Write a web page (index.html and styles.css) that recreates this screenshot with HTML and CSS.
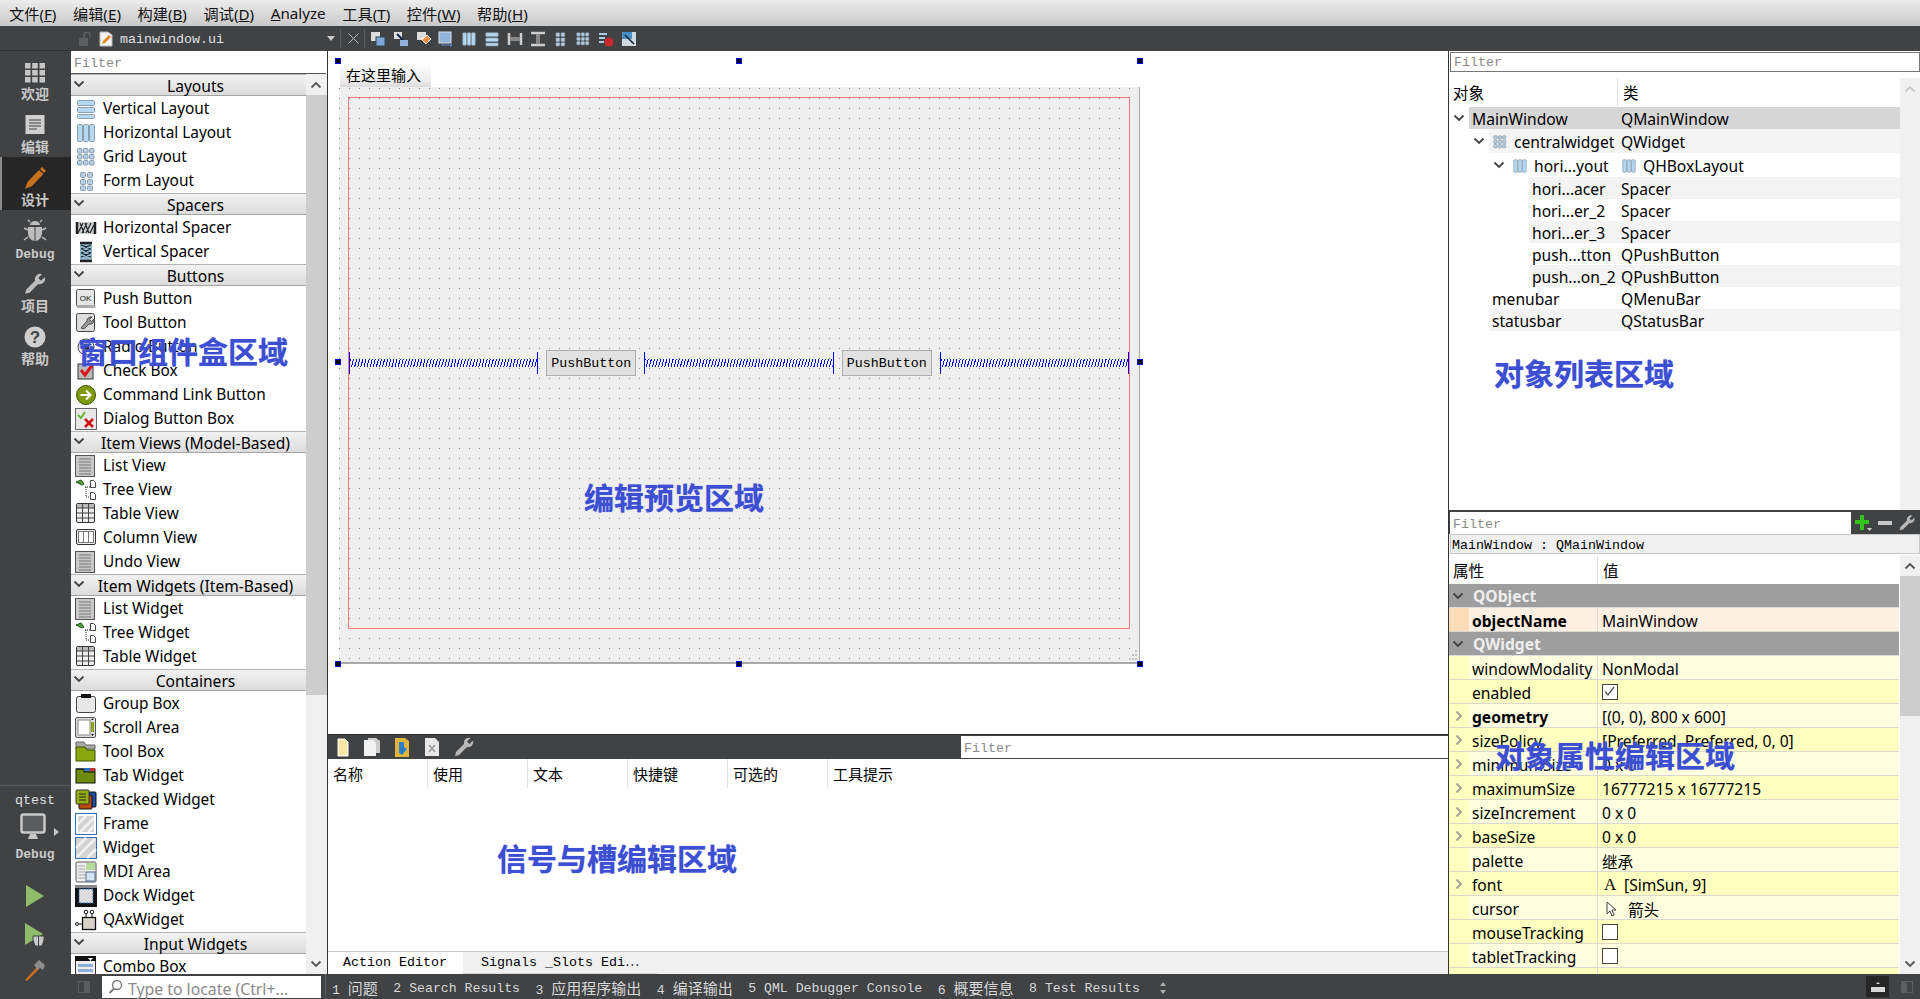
FILE: index.html
```html
<!DOCTYPE html>
<html lang="en">
<head>
    <meta charset="UTF-8">
    <title>Qt Designer</title>
    <link rel="stylesheet" href="styles.css">
</head>
<body>
<svg class="defs" width="0" height="0">
    <symbol id="chev" viewBox="0 0 12 8"><path d="M1.5 1.5 6 6l4.500-4.500" fill="none" stroke="currentColor" stroke-width="1.800"/></symbol>
    <symbol id="chevr" viewBox="0 0 8 12"><path d="M1.500 1.500 6 6l-4.500 4.500" fill="none" stroke="currentColor" stroke-width="2"/></symbol>
    <symbol id="chevu" viewBox="0 0 12 8"><path d="M1.500 6.500 6 2l4.500 4.500" fill="none" stroke="currentColor" stroke-width="1.800"/></symbol>
    <symbol id="vlayout" viewBox="0 0 22 22"><g fill="#b5d9f2" stroke="#8b9cab"><rect x="2.500" y="2.500" width="17" height="5" rx="1"/><rect x="2.500" y="9.500" width="17" height="5" rx="1"/><rect x="2.500" y="16.500" width="17" height="4" rx="1"/></g></symbol>
    <symbol id="hlayout" viewBox="0 0 22 22"><g fill="#b5d9f2" stroke="#8b9cab"><rect x="2.500" y="2.500" width="5" height="17" rx="1"/><rect x="8.500" y="2.500" width="5" height="17" rx="1"/><rect x="14.500" y="2.500" width="5" height="17" rx="1"/></g></symbol>
    <symbol id="grid" viewBox="0 0 22 22"><g fill="#b5d0e6" stroke="#8b9cab"><rect x="2.500" y="2.500" width="4.500" height="4.500" rx="1"/><rect x="8.500" y="2.500" width="4.500" height="4.500" rx="1"/><rect x="14.500" y="2.500" width="4.500" height="4.500" rx="1"/><rect x="2.500" y="8.500" width="4.500" height="4.500" rx="1"/><rect x="8.500" y="8.500" width="4.500" height="4.500" rx="1"/><rect x="14.500" y="8.500" width="4.500" height="4.500" rx="1"/><rect x="2.500" y="14.500" width="4.500" height="4.500" rx="1"/><rect x="8.500" y="14.500" width="4.500" height="4.500" rx="1"/><rect x="14.500" y="14.500" width="4.500" height="4.500" rx="1"/></g></symbol>
    <symbol id="form" viewBox="0 0 22 22"><g fill="#b5d0e6" stroke="#8b9cab"><rect x="5.500" y="2.500" width="5" height="5" rx="1"/><rect x="12.500" y="2.500" width="5" height="5" rx="1"/><rect x="5.500" y="9.500" width="5" height="5" rx="1"/><rect x="12.500" y="9.500" width="5" height="5" rx="1"/><rect x="5.500" y="16" width="5" height="4.500" rx="1"/><rect x="12.500" y="16" width="5" height="4.500" rx="1"/></g></symbol>
    <symbol id="hspacer" viewBox="0 0 22 22"><rect x="1" y="5" width="20" height="12" fill="#c9d0d4"/><path d="M2 5v12M20 5v12" stroke="#222" stroke-width="2.500"/><path d="M3 16 8 6M7 16l5-10M11 16l5-10M15 16l4-8M5 6l4 10M10 6l4 10" stroke="#2b2b2b" stroke-width="1.300" fill="none"/></symbol>
    <symbol id="vspacer" viewBox="0 0 22 22"><rect x="5" y="1" width="12" height="20" fill="#8fb7c9"/><path d="M5 2h12M5 20h12" stroke="#222" stroke-width="2.500"/><path d="M6 4l10 4M6 8l10 4M6 12l10 4M16 4 6 8M16 8 6 12M16 12 6 16" stroke="#1c2a30" stroke-width="1.300" fill="none"/></symbol>
    <symbol id="okbtn" viewBox="0 0 22 22"><rect x="1.500" y="1.500" width="18" height="17" rx="2" fill="#e6e6e6" stroke="#444"/><rect x="2.500" y="17" width="18" height="3" fill="#aaa"/><text x="10.500" y="13" font-size="8" text-anchor="middle" font-family="Liberation Sans" fill="#111">OK</text></symbol>
    <symbol id="toolbtn" viewBox="0 0 22 22"><rect x="1.500" y="1.500" width="18" height="18" rx="2" fill="#ddd" stroke="#444"/><path d="M6 16l6-7a4 4 0 0 1 5-4l-2.500 2.500 2 2L19 7a4 4 0 0 1-5 5l-5 5z" fill="#999" stroke="#333" stroke-width=".8"/></symbol>
    <symbol id="radio" viewBox="0 0 22 22"><circle cx="11" cy="11" r="8" fill="#eee" stroke="#444"/><circle cx="11" cy="11" r="3.500" fill="#222"/></symbol>
    <symbol id="check" viewBox="0 0 22 22"><rect x="3" y="4" width="15" height="15" fill="#bbb" stroke="#333"/><path d="M6 10l4 5 8-11" fill="none" stroke="#d8141c" stroke-width="3"/></symbol>
    <symbol id="cmdlink" viewBox="0 0 22 22"><circle cx="11" cy="11" r="9.500" fill="#7d9a10" stroke="#3d4f06"/><path d="M5.500 11h9M11 6.500l4.500 4.500-4.500 4.500" fill="none" stroke="#fff" stroke-width="2"/></symbol>
    <symbol id="dialogbtn" viewBox="0 0 22 22"><rect x=".5" y=".5" width="21" height="21" fill="#e8e8e8" stroke="#666"/><path d="M3 7l3 3 4-6" fill="none" stroke="#6cb12a" stroke-width="2"/><path d="M10 11l8 8M18 11l-8 8" stroke="#cc1010" stroke-width="2.500"/></symbol>
    <symbol id="listv" viewBox="0 0 22 22"><rect x=".5" y=".5" width="19" height="21" fill="#c8c8c8" stroke="#555"/><path d="M4 4h12M4 7h12M4 10h12M4 13h12M4 16h12M4 19h12" stroke="#777"/></symbol>
    <symbol id="treev" viewBox="0 0 22 22"><path d="M1 3l5-2 3 4-2 1z" fill="#4fa03a" stroke="#1d5a18"/><path d="M10 8h5M11 8v10h4" fill="none" stroke="#222" stroke-dasharray="1 1"/><path d="M15.500 1.500h3l2 2v5h-5zM15.500 13.500h3l2 2v5h-5z" fill="#fff" stroke="#444"/></symbol>
    <symbol id="tablev" viewBox="0 0 22 22"><rect x="1.500" y=".5" width="18" height="19" rx="1.500" fill="#eee" stroke="#333"/><rect x="2" y="1" width="17" height="4" fill="#bbb"/><path d="M2 5h17M2 10h17M2 15h17M7.500 1v18M13.500 1v18" stroke="#444"/></symbol>
    <symbol id="columnv" viewBox="0 0 22 22"><rect x="1.500" y="2.500" width="19" height="15" rx="1.500" fill="#eee" stroke="#333"/><rect x="3.500" y="4.500" width="15" height="11" fill="#fff" stroke="#777"/><path d="M8.500 5v10M13.500 5v10" stroke="#777"/></symbol>
    <symbol id="groupb" viewBox="0 0 22 22"><rect x="1.500" y="3.500" width="19" height="16" rx="2" fill="#e8e8e8" stroke="#444"/><rect x="6" y="1" width="10" height="4" fill="#111"/></symbol>
    <symbol id="scrolla" viewBox="0 0 22 22"><rect x=".5" y=".5" width="20" height="20" rx="1.500" fill="#ddd" stroke="#555"/><rect x="3" y="3" width="12" height="15" fill="#fff" stroke="#888"/><rect x="16" y="5" width="3" height="10" fill="#8aa80e"/><path d="M16 3h3l-1.500-1.500zM16 17h3l-1.500 2z" fill="#111"/></symbol>
    <symbol id="toolb" viewBox="0 0 22 22"><path d="M1 1h8l2 3h9v4H1z" fill="#aaa" stroke="#666"/><path d="M1 6h9l2 3h8v11H1z" fill="#8aa80e" stroke="#3d4f06"/></symbol>
    <symbol id="tabw" viewBox="0 0 22 22"><rect x="1" y="4" width="19" height="14" fill="#6e8b0c" stroke="#111"/><path d="M1 4h8v3h11" fill="none" stroke="#111"/><rect x="9" y="3" width="6" height="3" fill="#2a70c8"/><rect x="15" y="3" width="5" height="3" fill="#c83030"/></symbol>
    <symbol id="stacked" viewBox="0 0 22 22"><rect x="8" y="3" width="13" height="15" rx="1" fill="#1f4da8" stroke="#111"/><rect x="4" y="6" width="13" height="14" rx="1" fill="#b84a10" stroke="#111"/><rect x="1" y="1" width="13" height="14" rx="1" fill="#94b010" stroke="#333"/><path d="M4 5h7M4 8h7M4 11h7" stroke="#222"/></symbol>
    <symbol id="frame" viewBox="0 0 22 22"><rect x=".5" y=".5" width="21" height="21" fill="#fff" stroke="#2f6db5"/><rect x="3" y="3" width="16" height="16" fill="#d4d4d4"/><path d="M3 11l8-8M5 19 19 5M13 19l6-6" stroke="#f2f2f2" stroke-width="2.500"/></symbol>
    <symbol id="widgetw" viewBox="0 0 22 22"><rect x=".5" y=".5" width="21" height="21" fill="#d4d4d4" stroke="#2f6db5"/><path d="M1 11 11 1M2 20 20 2M12 21l9-9" stroke="#f2f2f2" stroke-width="2.500"/></symbol>
    <symbol id="mdi" viewBox="0 0 22 22"><rect x="1" y="1" width="20" height="20" rx="1.500" fill="#eee" stroke="#555"/><path d="M3 5h7M3 8h7M3 11h7M3 14h7M3 17h7" stroke="#aaa"/><rect x="11" y="2" width="9" height="7" fill="#b4dc96"/><rect x="11" y="11" width="9" height="9" fill="#d2e4f4" stroke="#4d6d8d"/></symbol>
    <symbol id="dock" viewBox="0 0 22 22"><rect width="22" height="22" fill="#111"/><rect y="0" width="22" height="3" fill="#888"/><rect x="4" y="4" width="14" height="14" fill="#ddd" stroke="#2f6db5" stroke-dasharray="2 1"/></symbol>
    <symbol id="qax" viewBox="0 0 22 22"><rect x="7.500" y="8.500" width="13" height="12" fill="#d6d2c8" stroke="#111" stroke-width="1.300"/><path d="M11 8V5M17 8V5M1 15h6" stroke="#111"/><circle cx="11" cy="3" r="1.800" fill="#fff" stroke="#111"/><circle cx="17" cy="3" r="1.800" fill="#fff" stroke="#111"/><circle cx="2" cy="15" r="1.500" fill="#fff" stroke="#111"/></symbol>
    <symbol id="combo" viewBox="0 0 22 22"><rect x=".5" y=".5" width="20" height="24" fill="#eee" stroke="#333"/><rect y="0" width="21" height="5" fill="#111"/><path d="M13 2h5l-2.500 3z" fill="#fff"/><rect x="3" y="8" width="15" height="3" fill="#8cb0d8"/><rect x="3" y="13" width="15" height="3" fill="#8cb0d8"/><rect x="3" y="18" width="15" height="3" fill="#8cb0d8"/></symbol>
    <symbol id="wrench" viewBox="0 0 22 22"><path d="M2 20 3 16l8-8a5 5 0 0 1 6.500-6L14 5.500l2.500 2.500L20 4.500a5 5 0 0 1-6 6.500l-8 8z" fill="currentColor"/></symbol>
</svg>

<div class="menubar">
    <span class="menu">文件(<u>F</u>)</span>
    <span class="menu">编辑(<u>E</u>)</span>
    <span class="menu">构建(<u>B</u>)</span>
    <span class="menu">调试(<u>D</u>)</span>
    <span class="menu"><u>A</u>nalyze</span>
    <span class="menu">工具(<u>T</u>)</span>
    <span class="menu">控件(<u>W</u>)</span>
    <span class="menu">帮助(<u>H</u>)</span>
</div>

<div class="app">
    <div class="modebar">
        <div class="mode-top"></div>
        <div class="mode">
            <svg class="mode-ico" viewBox="0 0 24 24"><g fill="#c6c6c6"><rect x="2" y="3" width="5.500" height="5.500"/><rect x="9.200" y="3" width="5.500" height="5.500"/><rect x="16.500" y="3" width="5.500" height="5.500"/><rect x="2" y="10" width="5.500" height="5.500"/><rect x="9.200" y="10" width="5.500" height="5.500"/><rect x="16.500" y="10" width="5.500" height="5.500"/><rect x="2" y="17" width="5.500" height="5.500"/><rect x="9.200" y="17" width="5.500" height="5.500"/><rect x="16.500" y="17" width="5.500" height="5.500"/></g></svg>
            <span>欢迎</span>
        </div>
        <div class="mode">
            <svg class="mode-ico" viewBox="0 0 24 24"><rect x="2.500" y="2" width="19" height="19" fill="#cfcfcf"/><path d="M6 7h12M6 10h12M6 13h12M6 16h8" stroke="#444" stroke-width="1.200"/></svg>
            <span>编辑</span>
        </div>
        <div class="mode active">
            <svg class="mode-ico" viewBox="0 0 24 24"><path d="M2 23l2.500-7L16 4l4.500 4L9 20z" fill="#c9701c"/><path d="M17 3l2-2 4 4-2 2z" fill="#c9701c"/></svg>
            <span>设计</span>
        </div>
        <div class="mode">
            <svg class="mode-ico" viewBox="0 0 24 24"><g fill="#bdbdbd"><path d="M7 6a5 4 0 0 1 10 0z"/><path d="M5 8h6.500v14A7 8 0 0 1 5 14zM12.500 8H19v6a7 8 0 0 1-6.500 8z"/></g><path d="M1 9l4 2M23 9l-4 2M1 21l4-3M23 21l-4-3M7 3 5 1M17 3l2-2" stroke="#bdbdbd" stroke-width="1.500"/></svg>
            <span class="mode-latin">Debug</span>
        </div>
        <div class="mode">
            <svg class="mode-ico wrench-ico" viewBox="0 0 22 22"><use href="#wrench"/></svg>
            <span>项目</span>
        </div>
        <div class="mode">
            <svg class="mode-ico" viewBox="0 0 24 24"><circle cx="12" cy="12" r="10.500" fill="#cfcfcf"/><text x="12" y="18" font-size="17" font-weight="700" text-anchor="middle" font-family="Liberation Sans" fill="#404244">?</text></svg>
            <span>帮助</span>
        </div>

        <div class="kit">
            <div class="kit-name">qtest</div>
            <div class="kit-monitor">
                <svg width="26" height="28" viewBox="0 0 26 28"><rect x="1.500" y="1.500" width="23" height="18" rx="2" fill="#5a5c5e" stroke="#c8c8c8" stroke-width="2.500"/><path d="M10 21h6l2 5H8z" fill="#c8c8c8"/></svg>
                <svg class="kit-arrow" width="5" height="8" viewBox="0 0 5 8"><path d="M0 0l5 4-5 4z" fill="#c8c8c8"/></svg>
            </div>
            <div class="kit-debug">Debug</div>
            <div class="run-btn"><svg width="20" height="24" viewBox="0 0 20 24"><path d="M1 1l18 11L1 23z" fill="#8fbc6a"/></svg></div>
            <div class="run-btn"><svg width="22" height="26" viewBox="0 0 22 26"><path d="M1 1l18 11L1 23z" fill="#8fbc6a"/><path d="M9 14h11v4l-2 6h-7l-2-6z" fill="#c8c8c8" stroke="#404244"/><path d="M14.500 14v10" stroke="#404244"/></svg></div>
            <div class="run-btn"><svg width="24" height="24" viewBox="0 0 24 24"><path d="M2 22 14 9l2 2L4 23z" fill="#c9701c"/><path d="M11 7l5-5 6 5-2 5-3-2-2 2z" fill="#8d8d8d"/></svg></div>
        </div>
    </div>

    <div class="workspace">
        <div class="edbar">
            <svg class="ed-lock" width="14" height="14" viewBox="0 0 14 14"><rect x="1" y="6" width="9" height="8" fill="#5c5e60"/><path d="M6 6V3a3 3 0 0 1 6 0v2" fill="none" stroke="#5c5e60" stroke-width="1.500"/></svg>
            <svg class="ed-doc" width="14" height="16" viewBox="0 0 14 16"><path d="M1 1h8l4 3v11H1z" fill="#f2f2f2" stroke="#bbb"/><path d="M3 13l1-3 6-6 2 2-6 6z" fill="#e08a1e"/></svg>
            <span class="ed-file">mainwindow.ui</span>
            <svg class="ed-drop" width="8" height="5" viewBox="0 0 8 5"><path d="M0 0h8L4 5z" fill="#c8c8c8"/></svg>
            <span class="ed-sep"></span>
            <svg class="ed-close" width="11" height="11" viewBox="0 0 11 11"><path d="M.5.5l10 10M10.500.5l-10 10" stroke="#b8b8b8"/></svg>
            <span class="ed-sep"></span>
            <div class="ed-tools">
                <svg viewBox="0 0 16 16"><rect x="1" y="1" width="9" height="9" fill="#ddd"/><rect x="6" y="6" width="9" height="9" fill="#7fa8d8" stroke="#345"/></svg>
                <svg viewBox="0 0 16 16"><rect x="1" y="1" width="8" height="7" fill="#ddd"/><path d="M4 3l6 6" stroke="#124" stroke-width="2"/><rect x="7" y="9" width="8" height="6" fill="#8fb4dc"/></svg>
                <svg viewBox="0 0 16 16"><rect x="1" y="1" width="9" height="8" fill="#ddd"/><path d="M6 9l5-5 4 4-5 5z" fill="#f08a3c" stroke="#fff"/></svg>
                <svg viewBox="0 0 16 16"><rect x="1" y="1" width="12" height="11" fill="#8fb4dc" stroke="#ddd"/><path d="M3 14h11M12 12l2 2-2 2" stroke="#5a8ed0" fill="none"/></svg>
                <svg viewBox="0 0 16 16"><use href="#hlayout"/></svg>
                <svg viewBox="0 0 16 16"><use href="#vlayout"/></svg>
                <svg viewBox="0 0 16 16"><path d="M2 2v12M14 2v12" stroke="#ccc" stroke-width="2.500"/><path d="M3 8h10" stroke="#888" stroke-width="4"/></svg>
                <svg viewBox="0 0 16 16"><path d="M1 2h14M1 14h14" stroke="#ccc" stroke-width="2.500"/><path d="M8 3v10" stroke="#888" stroke-width="4"/></svg>
                <svg viewBox="0 0 16 16"><use href="#form"/></svg>
                <svg viewBox="0 0 16 16"><use href="#grid"/></svg>
                <svg viewBox="0 0 16 16"><path d="M1 3h8M1 7h6M1 11h5" stroke="#a8cce8" stroke-width="2"/><circle cx="11" cy="11" r="4.500" fill="#c8282c"/></svg>
                <svg viewBox="0 0 16 16"><rect x="1" y="1" width="14" height="14" fill="#cfd8e0"/><rect x="1" y="1" width="10" height="7" fill="#4a8ec8"/><path d="M4 4l9 9" stroke="#123" stroke-width="1.500"/></svg>
            </div>
        </div>

        <div class="panes">
            <div class="widgetbox">
                <div class="filter wb-filter">Filter</div>
                <div class="wb-body">
                    <div class="wb-list">
                        <div class="cat first"><svg class="cat-chev"><use href="#chev"/></svg><span>Layouts</span></div>
                        <div class="item"><svg><use href="#vlayout"/></svg>Vertical Layout</div>
                        <div class="item"><svg><use href="#hlayout"/></svg>Horizontal Layout</div>
                        <div class="item"><svg><use href="#grid"/></svg>Grid Layout</div>
                        <div class="item"><svg><use href="#form"/></svg>Form Layout</div>
                        <div class="cat"><svg class="cat-chev"><use href="#chev"/></svg><span>Spacers</span></div>
                        <div class="item"><svg><use href="#hspacer"/></svg>Horizontal Spacer</div>
                        <div class="item"><svg><use href="#vspacer"/></svg>Vertical Spacer</div>
                        <div class="cat"><svg class="cat-chev"><use href="#chev"/></svg><span>Buttons</span></div>
                        <div class="item"><svg><use href="#okbtn"/></svg>Push Button</div>
                        <div class="item"><svg><use href="#toolbtn"/></svg>Tool Button</div>
                        <div class="item"><svg><use href="#radio"/></svg>Radio Button</div>
                        <div class="item"><svg><use href="#check"/></svg>Check Box</div>
                        <div class="item"><svg><use href="#cmdlink"/></svg>Command Link Button</div>
                        <div class="item"><svg><use href="#dialogbtn"/></svg>Dialog Button Box</div>
                        <div class="cat"><svg class="cat-chev"><use href="#chev"/></svg><span>Item Views (Model-Based)</span></div>
                        <div class="item"><svg><use href="#listv"/></svg>List View</div>
                        <div class="item"><svg><use href="#treev"/></svg>Tree View</div>
                        <div class="item"><svg><use href="#tablev"/></svg>Table View</div>
                        <div class="item"><svg><use href="#columnv"/></svg>Column View</div>
                        <div class="item"><svg><use href="#listv"/></svg>Undo View</div>
                        <div class="cat"><svg class="cat-chev"><use href="#chev"/></svg><span>Item Widgets (Item-Based)</span></div>
                        <div class="item"><svg><use href="#listv"/></svg>List Widget</div>
                        <div class="item"><svg><use href="#treev"/></svg>Tree Widget</div>
                        <div class="item"><svg><use href="#tablev"/></svg>Table Widget</div>
                        <div class="cat"><svg class="cat-chev"><use href="#chev"/></svg><span>Containers</span></div>
                        <div class="item"><svg><use href="#groupb"/></svg>Group Box</div>
                        <div class="item"><svg><use href="#scrolla"/></svg>Scroll Area</div>
                        <div class="item"><svg><use href="#toolb"/></svg>Tool Box</div>
                        <div class="item"><svg><use href="#tabw"/></svg>Tab Widget</div>
                        <div class="item"><svg><use href="#stacked"/></svg>Stacked Widget</div>
                        <div class="item"><svg><use href="#frame"/></svg>Frame</div>
                        <div class="item"><svg><use href="#widgetw"/></svg>Widget</div>
                        <div class="item"><svg><use href="#mdi"/></svg>MDI Area</div>
                        <div class="item"><svg><use href="#dock"/></svg>Dock Widget</div>
                        <div class="item"><svg><use href="#qax"/></svg>QAxWidget</div>
                        <div class="cat"><svg class="cat-chev"><use href="#chev"/></svg><span>Input Widgets</span></div>
                        <div class="item"><svg><use href="#combo"/></svg>Combo Box</div>
                    </div>
                    <div class="scroll wb-scroll">
                        <svg class="sb-up"><use href="#chevu"/></svg>
                        <div class="sb-thumb"></div>
                        <svg class="sb-down"><use href="#chev"/></svg>
                    </div>
                </div>
            </div>

            <div class="center">
                <div class="canvas">
                    <div class="form">
                        <div class="form-menu"><span>在这里输入</span></div>
                        <div class="form-central">
                            <div class="central-box">
                                <div class="spring"></div>
                                <div class="pushbtn">PushButton</div>
                                <div class="spring"></div>
                                <div class="pushbtn">PushButton</div>
                                <div class="spring"></div>
                            </div>
                            <svg class="grip" width="12" height="12" viewBox="0 0 12 12"><path d="M9 1h2v2H9zM6 5h2v2H6zM9 5h2v2H9zM3 9h2v2H3zM6 9h2v2H6zM9 9h2v2H9z" fill="#c4c4c4"/></svg>
                        </div>
                        <i class="handle h-tl"></i><i class="handle h-tc"></i><i class="handle h-tr"></i>
                        <i class="handle h-ml"></i><i class="handle h-mr"></i>
                        <i class="handle h-bl"></i><i class="handle h-bc"></i><i class="handle h-br"></i>
                    </div>
                </div>
                <div class="action-bar">
                    <div class="action-tools">
                        <svg width="12" height="20" viewBox="0 0 12 20"><path d="M1 2h7l3 3v14H1z" fill="#fbe7a8" stroke="#fff"/></svg>
                        <svg width="18" height="20" viewBox="0 0 18 20"><path d="M5 1h8l4 3v12H5z" fill="#ccc"/><path d="M1 3h9l3 3v13H1z" fill="#f2f2f2"/></svg>
                        <svg width="16" height="22" viewBox="0 0 16 22"><path d="M1 2h10l4 3v16H1z" fill="#e2b43c"/><path d="M5 6h5v5l3 2-5 6-3-2z" fill="#2b7fc8"/></svg>
                        <svg width="16" height="20" viewBox="0 0 16 20"><path d="M1 1h10l4 4v14H1z" fill="#e8e8e8"/><path d="M5 8l6 7M11 8l-6 7" stroke="#999" stroke-width="1.500"/></svg>
                        <svg class="tool-wrench" width="22" height="22"><use href="#wrench"/></svg>
                    </div>
                    <div class="filter action-filter">Filter</div>
                </div>
                <div class="action-head">
                    <span>名称</span><span>使用</span><span>文本</span><span>快捷键</span><span>可选的</span><span class="last">工具提示</span>
                </div>
                <div class="action-body"></div>
                <div class="tabs">
                    <div class="tab current">Action Editor</div>
                    <div class="tab">Signals _Slots Edi⋯</div>
                </div>
            </div>

            <div class="right">
                <div class="inspector">
                    <div class="filter ins-filter">Filter</div>
                    <div class="ins-body">
                        <div class="ins-table">
                            <div class="ins-head"><span class="h-name">对象</span><span class="h-cls">类</span></div>
                            <div class="tree-row"><span class="indent i0"><svg class="chev"><use href="#chev"/></svg></span><div class="tree-cells sel"><span class="name">MainWindow</span><span class="cls">QMainWindow</span></div></div>
                            <div class="tree-row tall"><span class="indent i1"><svg class="chev"><use href="#chev"/></svg></span><div class="tree-cells alt"><span class="name"><svg class="ti"><use href="#grid"/></svg>centralwidget</span><span class="cls">QWidget</span></div></div>
                            <div class="tree-row tall"><span class="indent i2"><svg class="chev"><use href="#chev"/></svg></span><div class="tree-cells"><span class="name"><svg class="ti"><use href="#hlayout"/></svg>hori...yout</span><span class="cls"><svg class="ti"><use href="#hlayout"/></svg>QHBoxLayout</span></div></div>
                            <div class="tree-row"><span class="indent i3"></span><div class="tree-cells alt"><span class="name">hori...acer</span><span class="cls">Spacer</span></div></div>
                            <div class="tree-row"><span class="indent i3"></span><div class="tree-cells"><span class="name">hori...er_2</span><span class="cls">Spacer</span></div></div>
                            <div class="tree-row"><span class="indent i3"></span><div class="tree-cells alt"><span class="name">hori...er_3</span><span class="cls">Spacer</span></div></div>
                            <div class="tree-row"><span class="indent i3"></span><div class="tree-cells"><span class="name">push...tton</span><span class="cls">QPushButton</span></div></div>
                            <div class="tree-row"><span class="indent i3"></span><div class="tree-cells alt"><span class="name">push...on_2</span><span class="cls">QPushButton</span></div></div>
                            <div class="tree-row"><span class="indent i1"></span><div class="tree-cells"><span class="name">menubar</span><span class="cls">QMenuBar</span></div></div>
                            <div class="tree-row"><span class="indent i1"></span><div class="tree-cells alt"><span class="name">statusbar</span><span class="cls">QStatusBar</span></div></div>
                        </div>
                        <div class="scroll ins-scroll">
                            <svg class="sb-up faded"><use href="#chevu"/></svg>
                        </div>
                    </div>
                </div>

                <div class="propedit">
                    <div class="prop-top">
                        <div class="filter prop-filter">Filter</div>
                        <div class="prop-tools">
                            <svg width="18" height="18" viewBox="0 0 18 18"><path d="M6 1h4v5h5v4h-5v6H6v-6H1V6h5z" fill="#33c41c"/><path d="M13 14h5l-2.500 3z" fill="#ccc"/></svg>
                            <svg width="16" height="18" viewBox="0 0 16 18"><rect x="1" y="7" width="14" height="4" fill="#c8c8c8"/></svg>
                            <svg class="tool-wrench" width="18" height="18"><use href="#wrench"/></svg>
                        </div>
                    </div>
                    <div class="prop-class">MainWindow : QMainWindow</div>
                    <div class="prop-body">
                        <div class="prop-table">
                            <div class="prop-head"><span class="ph-name">属性</span><span class="ph-val">值</span></div>
                            <div class="group"><svg class="chev"><use href="#chev"/></svg>QObject</div>
                            <div class="prop named"><span class="gut"></span><span class="pname"><b>objectName</b></span><span class="pval">MainWindow</span></div>
                            <div class="group"><svg class="chev"><use href="#chev"/></svg>QWidget</div>
                            <div class="prop"><span class="gut"></span><span class="pname">windowModality</span><span class="pval">NonModal</span></div>
                            <div class="prop dark"><span class="gut"></span><span class="pname">enabled</span><span class="pval"><i class="box"><svg width="13" height="13" viewBox="0 0 13 13"><path d="M2 6.500 5 10l6-8" fill="none" stroke="#555" stroke-width="1.300"/></svg></i></span></div>
                            <div class="prop"><span class="gut"><svg class="cr"><use href="#chevr"/></svg></span><span class="pname"><b>geometry</b></span><span class="pval">[(0, 0), 800 x 600]</span></div>
                            <div class="prop dark"><span class="gut"><svg class="cr"><use href="#chevr"/></svg></span><span class="pname">sizePolicy</span><span class="pval">[Preferred, Preferred, 0, 0]</span></div>
                            <div class="prop"><span class="gut"><svg class="cr"><use href="#chevr"/></svg></span><span class="pname">minimumSize</span><span class="pval">0 x 0</span></div>
                            <div class="prop dark"><span class="gut"><svg class="cr"><use href="#chevr"/></svg></span><span class="pname">maximumSize</span><span class="pval">16777215 x 16777215</span></div>
                            <div class="prop"><span class="gut"><svg class="cr"><use href="#chevr"/></svg></span><span class="pname">sizeIncrement</span><span class="pval">0 x 0</span></div>
                            <div class="prop dark"><span class="gut"><svg class="cr"><use href="#chevr"/></svg></span><span class="pname">baseSize</span><span class="pval">0 x 0</span></div>
                            <div class="prop"><span class="gut"></span><span class="pname">palette</span><span class="pval">继承</span></div>
                            <div class="prop dark"><span class="gut"><svg class="cr"><use href="#chevr"/></svg></span><span class="pname">font</span><span class="pval"><span class="pfont">A</span>[SimSun, 9]</span></div>
                            <div class="prop"><span class="gut"></span><span class="pname">cursor</span><span class="pval"><svg class="pcur" width="10" height="16" viewBox="0 0 10 16"><path d="M1 1v12l3-3 2 5 2-1-2-5h4z" fill="#fff" stroke="#444"/></svg>箭头</span></div>
                            <div class="prop dark"><span class="gut"></span><span class="pname">mouseTracking</span><span class="pval"><i class="box"></i></span></div>
                            <div class="prop"><span class="gut"></span><span class="pname">tabletTracking</span><span class="pval"><i class="box"></i></span></div>
                            <div class="prop dark"><span class="gut"></span><span class="pname"></span><span class="pval"></span></div>
                        </div>
                        <div class="scroll prop-scroll">
                            <svg class="sb-up"><use href="#chevu"/></svg>
                            <div class="sb-thumb"></div>
                            <svg class="sb-down"><use href="#chev"/></svg>
                        </div>
                    </div>
                </div>
            </div>
        </div>

        <div class="statusbar">
            <svg class="st-toggle" width="12" height="12" viewBox="0 0 12 12"><rect width="12" height="12" fill="#5c5e60"/><rect x="1" y="1" width="5" height="10" fill="#404244"/></svg>
            <div class="locator">
                <svg width="16" height="16" viewBox="0 0 16 16"><circle cx="9" cy="6" r="4.500" fill="none" stroke="#777" stroke-width="1.300"/><path d="M6 9.500 1.500 14" stroke="#777" stroke-width="1.800"/></svg>
                <span>Type to locate (Ctrl+...</span>
            </div>
            <div class="st-panes">
                <span>1 <em>问题</em></span>
                <span>2 Search Results</span>
                <span>3 <em>应用程序输出</em></span>
                <span>4 <em>编译输出</em></span>
                <span>5 QML Debugger Console</span>
                <span>6 <em>概要信息</em></span>
                <span>8 Test Results</span>
                <svg width="8" height="12" viewBox="0 0 8 12"><path d="M4 0l3 4H1zM4 12 1 8h6z" fill="#b0b0b0"/></svg>
            </div>
            <div class="st-right">
                <div class="st-active"><svg width="14" height="12" viewBox="0 0 14 12"><path d="M0 6h14v5H0z" fill="#d8d8d8"/><path d="M7 1l2 2H5z" fill="#d8d8d8"/></svg></div>
                <svg class="st-side" width="12" height="12" viewBox="0 0 12 12"><rect width="12" height="12" fill="#5c5e60"/><rect x="6" y="1" width="5" height="10" fill="#404244"/></svg>
            </div>
        </div>
    </div>
</div>

<!-- 截图上标注的区域名称 -->
<div class="note note-box">窗口组件盒区域</div>
<div class="note note-list">对象列表区域</div>
<div class="note note-edit">编辑预览区域</div>
<div class="note note-prop">对象属性编辑区域</div>
<div class="note note-slot">信号与槽编辑区域</div>
</body>
</html>
```

FILE: styles.css
```css
*{
    box-sizing: border-box;
}
html,body{
    margin: 0;
    height: 100%;
    overflow: hidden;
}
body{
    position: relative;
    display: flex;
    flex-direction: column;
    width: 1920px;
    height: 999px;
    background: #404244;
    color: #000;
    font-family: "Noto Sans", "Noto Sans CJK SC", sans-serif;
    font-size: 15.600px;
}
.defs{
    display: none;
}
svg{
    display: block;
    flex: none;
}
/*菜单栏*/
.menubar{
    display: flex;
    align-items: center;
    flex: none;
    height: 26px;
    padding-left: 9px;
    gap: 16.600px;
    background: linear-gradient(to bottom,#ececec,#c9c9c9);
    color: #111;
    font-size: 15.200px;
}
/*左边模式栏*/
.app{
    display: flex;
    flex: 1;
    min-height: 0;
}
.modebar{
    display: flex;
    flex-direction: column;
    flex: none;
    width: 71px;
    background: #404244;
}
.mode-top{
    height: 25px;
    border-bottom: 1px solid #333;
}
.mode{
    display: flex;
    flex-direction: column;
    align-items: center;
    height: 53px;
    padding: 9px 1px 0 0;
    color: #c8c8c8;
    font-size: 14px;
    font-weight: 700;
    line-height: 20px;
}
.mode.active{
    background: #262626;
    border-left: 2px solid #8a8a8a;
    padding-right: 3px;
}
.mode-ico{
    width: 24px;
    height: 24px;
}
.wrench-ico{
    color: #bdbdbd;
}
.mode-latin,.kit-debug{
    font-family: "Liberation Mono", monospace;
    font-size: 13px;
    font-weight: 700;
}
.mode-latin{
    padding-top: 2px;
}
.kit{
    margin-top: auto;
    padding-top: 7px;
    border-top: 1px solid #5c5e60;
    height: 214px;
    color: #c8c8c8;
}
.kit-name{
    height: 16px;
    line-height: 16px;
    padding-right: 1px;
    text-align: center;
    color: #e0e0e0;
    font-family: "Liberation Mono", monospace;
    font-size: 13.330px;
}
.kit-monitor{
    display: flex;
    align-items: flex-end;
    justify-content: center;
    gap: 8px;
    height: 34px;
    padding: 4px 2px 2px 10px;
}
.kit-arrow{
    margin-bottom: 5px;
}
.kit-debug{
    height: 20px;
    margin-top: 2px;
    padding-right: 1px;
    line-height: 20px;
    text-align: center;
}
.run-btn{
    display: flex;
    align-items: center;
    justify-content: center;
    height: 38px;
    padding-right: 1px;
    margin-top: 1px;
}
.kit-debug + .run-btn{
    margin-top: 12px;
}
.run-btn:last-child{
    margin-top: -3px;
}
/*工作区*/
.workspace{
    display: flex;
    flex-direction: column;
    flex: 1;
    min-width: 0;
}
.edbar{
    display: flex;
    align-items: center;
    flex: none;
    height: 25px;
    padding-left: 7px;
    background: #404244;
    color: #e0e0e0;
}
.ed-doc{
    margin-left: 7px;
}
.ed-file{
    width: 199px;
    margin-left: 7px;
    padding-top: 2px;
    font-family: "Liberation Mono", monospace;
    font-size: 13.330px;
}
.ed-sep{
    width: 1px;
    height: 19px;
    margin-left: 5px;
    background: #5c5e60;
}
.ed-drop{
    margin-left: 8px;
}
.ed-close{
    margin-left: 7px;
}
.ed-tools{
    display: flex;
    gap: 6.800px;
    margin-left: 5px;
}
.ed-tools svg{
    width: 16px;
    height: 16px;
}
.panes{
    display: flex;
    flex: 1;
    min-height: 0;
}
.filter{
    background: #fff;
    color: #8a8a8a;
    font-family: "Liberation Mono", monospace;
    font-size: 13.330px;
    padding-left: 3px;
}
/*窗口组件盒*/
.widgetbox{
    display: flex;
    flex-direction: column;
    flex: none;
    width: 257px;
    padding-top: 1px;
    background: #fff;
    border-right: 1px solid #333;
}
.wb-filter{
    height: 22px;
    line-height: 23px;
    margin-right: 1px;
    border-bottom: 1px solid #555;
}
.wb-body{
    display: flex;
    flex: 1;
    min-height: 0;
    overflow: hidden;
}
.wb-list{
    flex: none;
    width: 235px;
    overflow: hidden;
}
.cat{
    display: flex;
    align-items: center;
    justify-content: center;
    position: relative;
    height: 22px;
    margin-top: 1px;
    padding: 1px 0 0 14px;
    background: linear-gradient(to bottom,#f2f2f2,#dcdcdc);
    border-top: 1px solid #b4b4b4;
    border-bottom: 1px solid #a4a4a4;
    line-height: 20px;
}
.cat.first{
    margin-top: 0;
}
.cat-chev{
    position: absolute;
    left: 2px;
    top: 5px;
    width: 12px;
    height: 8px;
    color: #444;
}
.item{
    display: flex;
    align-items: center;
    height: 24px;
    padding: 1px 0 0 4px;
    gap: 6px;
    font-size: 15.400px;
    white-space: nowrap;
}
.item svg{
    width: 22px;
    height: 22px;
}
.scroll{
    position: relative;
    flex: none;
    background: #f0f0f0;
}
.wb-scroll{
    width: 21px;
}
.sb-up,.sb-down{
    position: absolute;
    left: 4px;
    width: 12px;
    height: 8px;
    color: #555;
}
.sb-up{
    top: 7px;
}
.sb-down{
    bottom: 6px;
}
.sb-up.faded{
    color: #c8c8c8;
}
.sb-thumb{
    background: #cdcdcd;
}
.wb-scroll .sb-thumb{
    margin-top: 21px;
    height: 600px;
}
/*中间的编辑区*/
.center{
    display: flex;
    flex-direction: column;
    flex: none;
    width: 1120px;
    background: #fff;
}
.canvas{
    flex: none;
    height: 683px;
    padding: 11px 0 0 11px;
}
.form{
    position: relative;
    width: 801px;
    height: 602px;
}
.form-menu{
    display: flex;
    height: 25px;
    padding-left: 1px;
}
.form-menu span{
    width: 91px;
    padding-left: 6px;
    line-height: 26px;
    background: linear-gradient(to bottom,#fff,#ececec 75%,#dcdcdc);
    font-size: 15px;
}
.form-central{
    position: relative;
    height: 577px;
    padding: 10px 9px 33px 9px;
    background-color: #efefef;
    background-image: radial-gradient(circle at 0.5px 0.5px,#8c8c8c 0.7px,transparent 0.8px);
    background-size: 10px 10px;
    background-position: 0 1px;
    border-right: 1px solid #a8a8a8;
    border-bottom: 2px solid #a8a8a8;
}
.central-box{
    display: flex;
    align-items: center;
    gap: 8px;
    height: 100%;
    border: 1px solid #f47a7a;
}
.spring{
    flex: 1;
    height: 22px;
    border-left: 1px solid #00f;
    border-right: 1px solid #00f;
    background: repeating-linear-gradient(105deg,#00f 0,#00f 1px,#fff 1px,#efefef 3px) center / 100% 8px no-repeat;
}
.pushbtn{
    flex: none;
    width: 90px;
    height: 26px;
    border: 1px solid #adadad;
    background: #e1e1e1;
    text-align: center;
    line-height: 26px;
    font-family: "Liberation Mono", monospace;
    font-size: 13.330px;
}
.grip{
    position: absolute;
    right: 1px;
    bottom: 1px;
}
.handle{
    position: absolute;
    width: 6px;
    height: 6px;
    background: #000;
    border: 1px solid #00f;
}
.h-tl{left:-4px;top:-4px;}
.h-tc{left:397px;top:-4px;}
.h-tr{right:-3px;top:-4px;}
.h-ml{left:-4px;top:297px;}
.h-mr{right:-3px;top:297px;}
.h-bl{left:-4px;bottom:-3px;}
.h-bc{left:397px;bottom:-3px;}
.h-br{right:-3px;bottom:-3px;}
/*动作编辑器*/
.action-bar{
    display: flex;
    align-items: center;
    justify-content: space-between;
    flex: none;
    height: 25px;
    background: #404244;
    border-top: 1px solid #333;
}
.action-tools{
    display: flex;
    align-items: center;
    gap: 13.500px;
    padding-left: 9px;
    color: #c0c0c0;
}
.tool-wrench{
    color: #b8b8b8;
}
.action-filter{
    width: 487px;
    height: 22px;
    line-height: 25px;
}
.action-head{
    display: flex;
    flex: none;
    height: 29px;
    font-size: 15px;
}
.action-head span{
    width: 100px;
    padding: 4px 0 0 5px;
    border-right: 1px solid #e4e4e4;
    white-space: nowrap;
}
.action-head span.last{
    border-right: 0;
}
.action-body{
    flex: 1;
}
.tabs{
    display: flex;
    flex: none;
    height: 23px;
    background: #f0f0f0;
    border-top: 1px solid #c8c8c8;
    font-family: "Liberation Mono", "Noto Sans CJK SC", monospace;
    font-size: 13.330px;
}
.tab{
    width: 195px;
    padding-left: 18px;
    line-height: 21px;
    border-bottom: 1px solid #d8d8d8;
}
.tab.current{
    width: 135px;
    padding-left: 15px;
    background: #fff;
    border-bottom: 0;
}
/*右边的对象列表和属性编辑器*/
.right{
    display: flex;
    flex-direction: column;
    flex: none;
    width: 472px;
    background: #fff;
    border-left: 1px solid #333;
}
.inspector{
    display: flex;
    flex-direction: column;
    flex: none;
    height: 459px;
    padding-top: 1px;
}
.ins-filter{
    flex: none;
    height: 20px;
    line-height: 20px;
    margin: 0 0 6px 1px;
    border: 1px solid #777;
}
.ins-body{
    display: flex;
    flex: 1;
    min-height: 0;
}
.ins-table{
    flex: 1;
    min-width: 0;
}
.ins-scroll{
    width: 20px;
}
.ins-head{
    display: flex;
    height: 29px;
    line-height: 30px;
}
.h-name{
    width: 169px;
    padding-left: 4px;
    border-right: 1px solid #e4e4e4;
}
.h-cls{
    padding-left: 5px;
}
.tree-row{
    display: flex;
    height: 22px;
}
.tree-row.tall{
    height: 24px;
}
.indent{
    display: flex;
    align-items: center;
    justify-content: flex-end;
    flex: none;
    padding-right: 4px;
}
.i0{width:20px;}
.i1{width:40px;}
.i2{width:60px;}
.i3{width:80px;}
.chev{
    width: 12px;
    height: 8px;
    color: #444;
}
.tree-cells{
    display: flex;
    align-items: center;
    flex: 1;
    min-width: 0;
    white-space: nowrap;
}
.tree-cells.sel{
    background: #d6d6d6;
}
.tree-cells.alt{
    background: #f4f4f4;
}
.name{
    display: flex;
    align-items: center;
    flex: 1;
    min-width: 0;
    padding: 2px 0 0 3px;
}
.cls{
    display: flex;
    align-items: center;
    flex: none;
    width: 281px;
    padding: 2px 0 0 2px;
}
.ti{
    width: 16px;
    height: 16px;
    margin-right: 6px;
}
.propedit{
    display: flex;
    flex-direction: column;
    flex: 1;
    min-height: 0;
}
.prop-top{
    display: flex;
    flex: none;
    height: 24px;
    padding-top: 2px;
    background: #404244;
}
.prop-filter{
    width: 401px;
    margin-left: 1px;
    line-height: 25px;
}
.prop-tools{
    display: flex;
    align-items: center;
    gap: 5px;
    padding-left: 3px;
    color: #999;
}
.prop-class{
    flex: none;
    height: 20px;
    margin-left: 1px;
    padding-left: 1px;
    line-height: 22px;
    background: #f0f0f0;
    border: 1px solid #c8c8c8;
    font-family: "Liberation Mono", monospace;
    font-size: 13.330px;
}
.prop-body{
    display: flex;
    flex: 1;
    min-height: 0;
    padding-top: 1px;
    overflow: hidden;
}
.prop-table{
    flex: 1;
    min-width: 0;
}
.prop-scroll{
    width: 20px;
    margin-left: 1px;
}
.prop-scroll .sb-thumb{
    margin-top: 21px;
    height: 140px;
}
.prop-head{
    display: flex;
    height: 29px;
    line-height: 32px;
}
.ph-name{
    width: 149px;
    padding-left: 4px;
    border-right: 1px solid #e4e4e4;
}
.ph-val{
    padding-left: 5px;
}
.group{
    display: flex;
    align-items: center;
    gap: 9px;
    height: 24px;
    padding: 1px 0 0 3px;
    background: #9e9e9e;
    border-bottom: 1px solid #ddd;
    color: #eee;
    font-weight: 700;
}
.prop{
    display: flex;
    height: 24px;
    background: #ffffdf;
    border-bottom: 1px solid #d9d9cf;
    white-space: nowrap;
}
.prop.dark{
    background: #ffffbf;
}
.prop.named{
    background: #fdf0e2;
}
.gut{
    display: flex;
    align-items: center;
    justify-content: center;
    flex: none;
    width: 20px;
    background: #ffffbf;
}
.named .gut{
    background: #fddcb8;
}
.cr{
    width: 8px;
    height: 12px;
    color: #a6a69a;
}
.pname{
    display: flex;
    align-items: center;
    flex: none;
    width: 129px;
    padding: 3px 0 0 3px;
    border-right: 1px solid #d9d9cf;
}
.pval{
    display: flex;
    align-items: center;
    flex: 1;
    padding: 3px 0 0 4px;
}
.box{
    display: block;
    width: 16px;
    height: 16px;
    margin-top: -3px;
    background: #fff;
    border: 1px solid #444;
}
.pfont{
    width: 22px;
    padding-left: 2px;
    font-family: "Liberation Serif", serif;
    font-size: 17px;
}
.pcur{
    margin: 0 12px 0 4px;
}
/*状态栏*/
.statusbar{
    display: flex;
    align-items: center;
    flex: none;
    height: 25px;
    padding-left: 7px;
    background: #404244;
    color: #d8d8d8;
    font-family: "Liberation Mono", "Noto Sans CJK SC", monospace;
    font-size: 13.200px;
}
.locator{
    display: flex;
    align-items: center;
    gap: 4px;
    width: 219px;
    height: 22px;
    margin: 1px 0 0 12px;
    padding-left: 6px;
    background: #fff;
    color: #8a8a8a;
    font-family: "Noto Sans", sans-serif;
    font-size: 15.800px;
}
.locator span{
    padding-top: 3px;
}
.st-panes{
    display: flex;
    align-items: center;
    gap: 15.500px;
    height: 100%;
    margin-left: 4px;
    padding: 3px 0 0 6px;
    border-left: 1px solid #5c5e60;
    white-space: nowrap;
}
.st-panes em{
    font-style: normal;
    font-size: 15px;
}
.st-panes svg{
    margin-left: 4px;
}
.st-right{
    display: flex;
    align-items: center;
    height: 100%;
    margin-left: auto;
    padding-right: 7px;
    gap: 12px;
}
.st-active{
    display: flex;
    align-items: center;
    justify-content: center;
    width: 23px;
    height: 21px;
    background: #262626;
}
/*标注文字*/
.note{
    position: absolute;
    color: #3c4fd2;
    font-family: "Noto Sans CJK SC", sans-serif;
    font-size: 30px;
    font-weight: 700;
    line-height: 40px;
    white-space: nowrap;
    text-shadow: 0 0 1px #8c8ce8;
}
.note-box{left:78px;top:330px;}
.note-list{left:1494px;top:352px;}
.note-edit{left:584px;top:476px;}
.note-prop{left:1495px;top:734px;}
.note-slot{left:497px;top:837px;}
```
